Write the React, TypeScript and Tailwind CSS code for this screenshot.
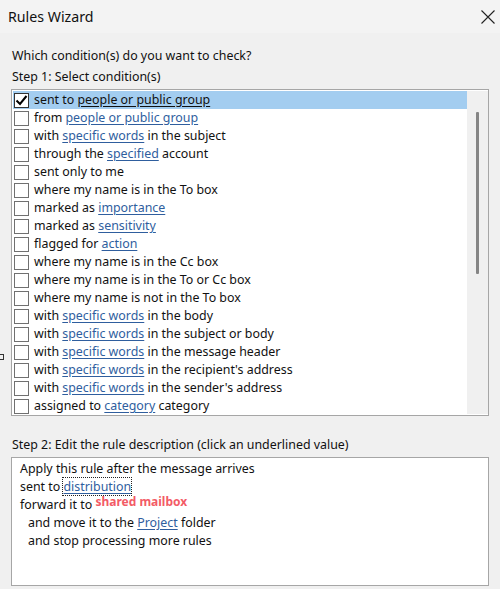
import React from "react";

type Part = string | { link: string };

const rows: Part[][] = [
  ["sent to ", { link: "people or public group" }],
  ["from ", { link: "people or public group" }],
  ["with ", { link: "specific words" }, " in the subject"],
  ["through the ", { link: "specified" }, " account"],
  ["sent only to me"],
  ["where my name is in the To box"],
  ["marked as ", { link: "importance" }],
  ["marked as ", { link: "sensitivity" }],
  ["flagged for ", { link: "action" }],
  ["where my name is in the Cc box"],
  ["where my name is in the To or Cc box"],
  ["where my name is not in the To box"],
  ["with ", { link: "specific words" }, " in the body"],
  ["with ", { link: "specific words" }, " in the subject or body"],
  ["with ", { link: "specific words" }, " in the message header"],
  ["with ", { link: "specific words" }, " in the recipient's address"],
  ["with ", { link: "specific words" }, " in the sender's address"],
  ["assigned to ", { link: "category" }, " category"],
];

function Row({ parts, selected }: { parts: Part[]; selected: boolean }) {
  return (
    <div
      className={`flex h-[18px] items-center pl-[1px] ${
        selected ? "bg-[#a3cdf0]" : ""
      }`}
    >
      <div
        className={`flex h-[15px] w-[15px] shrink-0 items-center justify-center border ${
          selected ? "border-[#333333] bg-white" : "border-[#707070] bg-white"
        }`}
      >
        {selected && (
          <svg width="13" height="13" viewBox="0 0 13 13">
            <polyline
              points="1.5,6.5 5,10 11.5,2"
              fill="none"
              stroke="#000"
              strokeWidth="2"
            />
          </svg>
        )}
      </div>
      <span className="ml-[5px] whitespace-pre text-[#111]">
        {parts.map((p, i) =>
          typeof p === "string" ? (
            <span key={i}>{p}</span>
          ) : (
            <span
              key={i}
              className={`underline underline-offset-[2px] ${
                selected ? "text-[#111]" : "text-[#2f5e9e]"
              }`}
            >
              {p.link}
            </span>
          )
        )}
      </span>
    </div>
  );
}

export default function App() {
  return (
    <div
      className="relative h-[589px] w-[500px] overflow-hidden bg-[#f0f0f0] text-[12.4px] leading-[16px] text-[#111]"
      style={{ fontFamily: '"Noto Sans", "Open Sans", Arial, sans-serif' }}
    >
      <div className="flex h-[33px] items-center justify-between bg-[#f3f3f3] pl-[8px] pr-[5px]">
        <span className="text-[14.2px] text-[#111]">Rules Wizard</span>
        <svg width="14" height="14" viewBox="0 0 14 14">
          <path d="M0.5 0.5 L13.5 13.5 M13.5 0.5 L0.5 13.5" stroke="#222" strokeWidth="1.1" fill="none" />
        </svg>
      </div>

      <div className="flex flex-col px-[11px] pt-[15px]">
        <div className="pl-[1px]">Which condition(s) do you want to check?</div>
        <div className="mt-[5px] pl-[1px]">Step 1: Select condition(s)</div>

        <div className="mt-[4px] flex h-[327px] border border-[#a6a6a6] bg-white p-[1px] pr-0">
          <div className="flex-1">
            {rows.map((r, i) => (
              <Row key={i} parts={r} selected={i === 0} />
            ))}
          </div>
          <div className="flex w-[21px] justify-center bg-[#f0f0f0] pt-[21px]">
            <div className="h-[162px] w-[3px] rounded-[1px] bg-[#858585]" />
          </div>
        </div>

        <div className="mt-[21px] pl-[1px]">
          Step 2: Edit the rule description (click an underlined value)
        </div>

        <div className="mt-[4px] h-[129px] border border-[#a6a6a6] bg-white px-[8px] pt-[2px] leading-[18px]">
          <div>Apply this rule after the message arrives</div>
          <div>
            sent to{" "}
            <span className="outline-1 outline-dotted outline-[#222] text-[#2f5e9e] underline underline-offset-[2px]">
              distribution
            </span>
          </div>
          <div>
            forward it to{" "}
            <span className="relative -top-[3px] text-[12px] font-bold text-[#f35b66]">
              shared mailbox
            </span>
          </div>
          <div className="pl-[8px]">
            and move it to the{" "}
            <span className="text-[#2f5e9e] underline underline-offset-[2px]">Project</span>{" "}
            folder
          </div>
          <div className="pl-[8px]">and stop processing more rules</div>
        </div>
      </div>

      <div className="absolute left-0 top-[354px] h-[6px] w-[4px] border border-l-0 border-[#333]" />
    </div>
  );
}
